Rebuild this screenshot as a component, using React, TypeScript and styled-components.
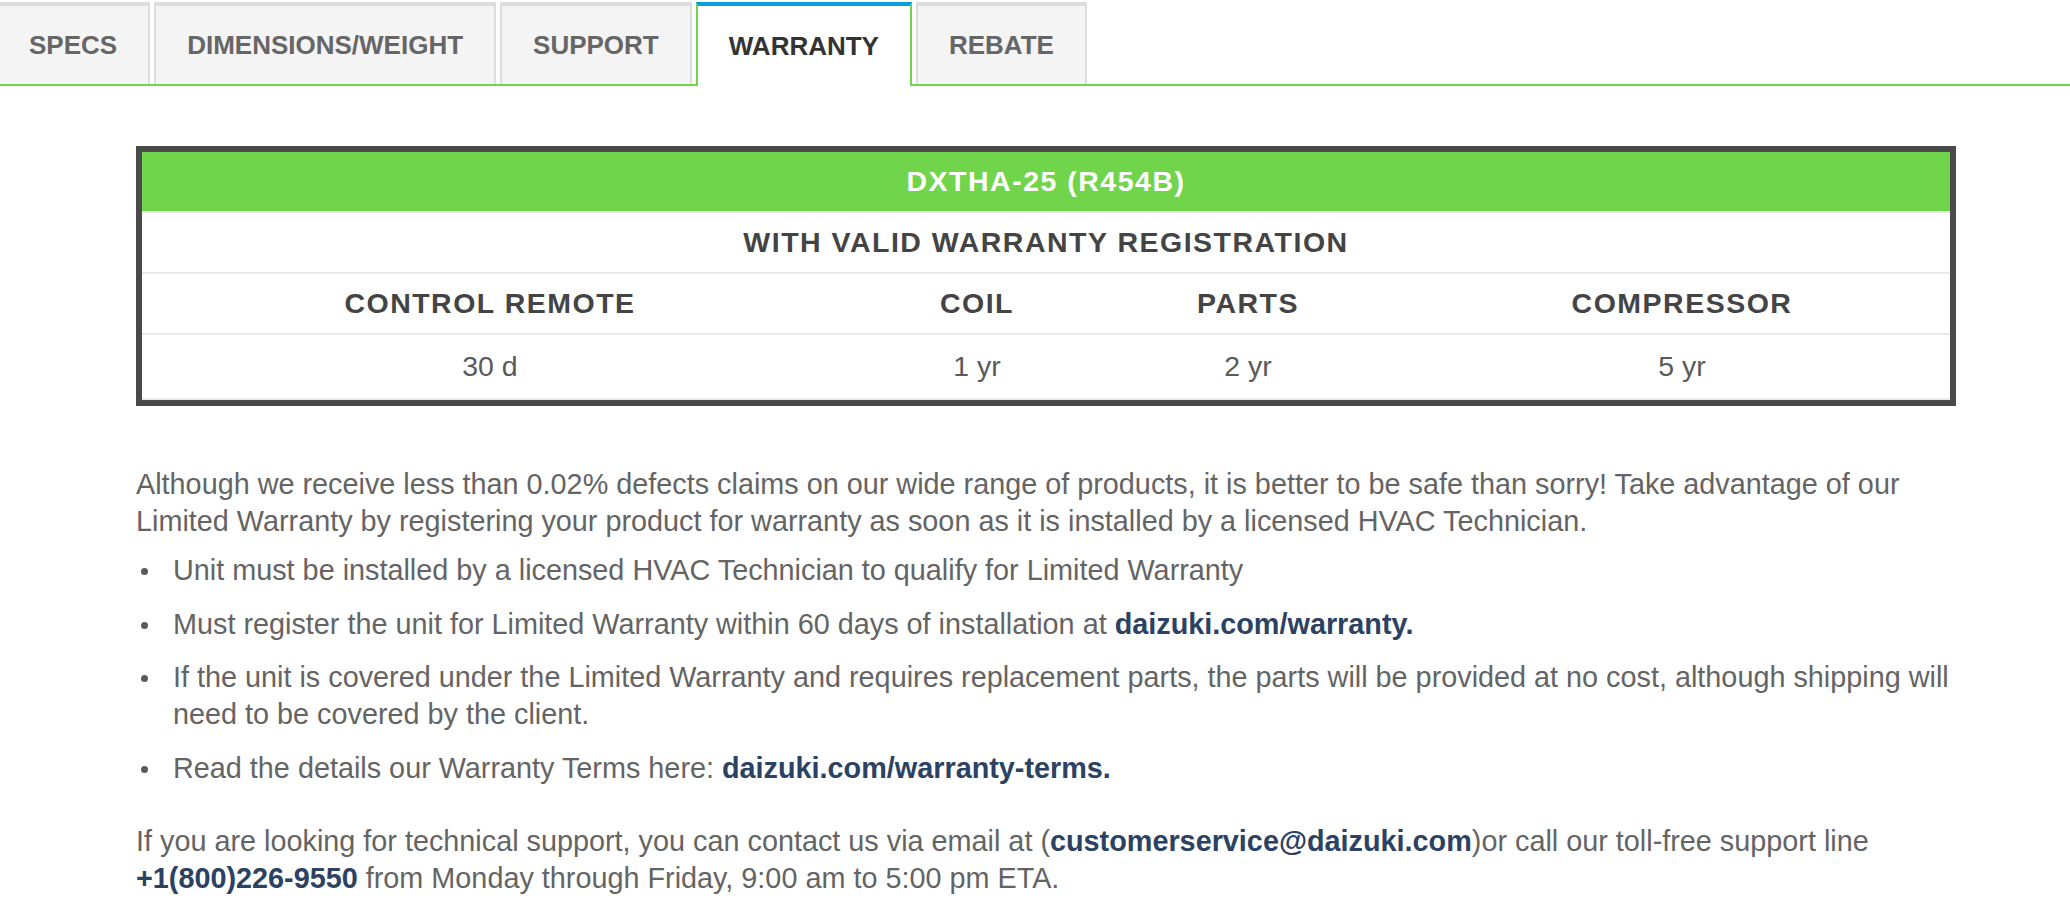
import React from 'react'
import styled, { createGlobalStyle } from 'styled-components'

const GREEN = '#71d54b'
const BLUE = '#0a9fdb'

const GlobalStyle = createGlobalStyle`
	html, body {
		margin: 0;
		padding: 0;
		background: #ffffff;
		font-family: "Liberation Sans", Arial, sans-serif;
	}
`

const TabBar = styled.div`
	display: flex;
	align-items: flex-end;
	padding-top: 2px;
	border-bottom: 2px solid ${GREEN};
`

const Tab = styled.div<{ $active?: boolean; $first?: boolean }>`
	display: flex;
	align-items: center;
	height: ${(p) => (p.$active ? '80px' : '78px')};
	margin-right: 4px;
	margin-bottom: ${(p) => (p.$active ? '-2px' : '0')};
	padding: 0 31px 0 ${(p) => (p.$first ? '29px' : '31px')};
	background: ${(p) => (p.$active ? '#ffffff' : '#f4f4f4')};
	border-top: 4px solid ${(p) => (p.$active ? BLUE : '#dddddd')};
	border-left: ${(p) => (p.$first ? 'none' : `2px solid ${p.$active ? GREEN : '#dddddd'}`)};
	border-right: 2px solid ${(p) => (p.$active ? GREEN : '#dddddd')};
	font-size: 26px;
	font-weight: 700;
	color: ${(p) => (p.$active ? '#333333' : '#666666')};
	white-space: nowrap;
`

const Content = styled.div`
	padding: 60px 94px 40px 136px;
`

const Table = styled.div`
	margin-right: 20px;
	border: 6px solid #4a4a4a;
`

const TitleRow = styled.div`
	display: flex;
	align-items: center;
	justify-content: center;
	height: 59px;
	background: ${GREEN};
	border-bottom: 2px solid #e9e9e9;
	color: #ffffff;
	font-size: 28.5px;
	font-weight: 700;
	letter-spacing: 1.5px;
`

const Row = styled.div<{ $tall?: boolean }>`
	display: grid;
	grid-template-columns: 696px 278px 264px 1fr;
	height: ${(p) => (p.$tall ? '63px' : '59px')};
	border-bottom: 2px solid #e9e9e9;
`

const Cell = styled.div<{ $head?: boolean; $span?: number; $last?: boolean }>`
	display: flex;
	align-items: center;
	justify-content: center;
	grid-column: span ${(p) => p.$span ?? 1};
	padding-left: ${(p) => (p.$last ? '34px' : '0')};
	font-size: 28.5px;
	font-weight: ${(p) => (p.$head ? 700 : 400)};
	letter-spacing: ${(p) => (p.$head ? '1.5px' : '0')};
	color: ${(p) => (p.$head ? '#444444' : '#5a5a5a')};
`

const Paragraph = styled.p<{ $gap: number }>`
	margin: ${(p) => p.$gap}px 0 0;
	font-size: 28.8px;
	line-height: 37px;
	color: #646464;
`

const List = styled.ul`
	list-style: none;
	margin: 12px 0 0;
	padding: 0 0 0 5px;
	display: flex;
	flex-direction: column;
	gap: 16.5px;
`

const Item = styled.li`
	display: flex;
	align-items: flex-start;
	gap: 25px;
	font-size: 28.8px;
	line-height: 37px;
	color: #646464;
`

const Bullet = styled.span`
	flex: none;
	width: 7px;
	height: 7px;
	margin-top: 16px;
	border-radius: 50%;
	background: #5a5a5a;
`

const Link = styled.a`
	color: #2b4263;
	font-weight: 700;
	text-decoration: none;
`

const tabs = ['SPECS', 'DIMENSIONS/WEIGHT', 'SUPPORT', 'WARRANTY', 'REBATE']

const columns = [
	{ label: 'CONTROL REMOTE', value: '30 d' },
	{ label: 'COIL', value: '1 yr' },
	{ label: 'PARTS', value: '2 yr' },
	{ label: 'COMPRESSOR', value: '5 yr' },
]

export default function App() {
	return (
		<>
			<GlobalStyle />
			<TabBar>
				{tabs.map((tab, index) => (
					<Tab key={tab} $first={index === 0} $active={tab === 'WARRANTY'}>{tab}</Tab>
				))}
			</TabBar>
			<Content>
				<Table>
					<TitleRow>DXTHA-25 (R454B)</TitleRow>
					<Row>
						<Cell $head $span={4}>WITH VALID WARRANTY REGISTRATION</Cell>
					</Row>
					<Row>
						{columns.map((col, index) => (
							<Cell key={col.label} $head $last={index === columns.length - 1}>{col.label}</Cell>
						))}
					</Row>
					<Row $tall>
						{columns.map((col, index) => (
							<Cell key={col.label} $last={index === columns.length - 1}>{col.value}</Cell>
						))}
					</Row>
				</Table>
				<Paragraph $gap={60}>
					Although we receive less than 0.02% defects claims on our wide range of products, it is better to be safe than sorry! Take advantage of our Limited Warranty by registering your product for warranty as soon as it is installed by a licensed HVAC Technician.
				</Paragraph>
				<List>
					<Item><Bullet /><span>Unit must be installed by a licensed HVAC Technician to qualify for Limited Warranty</span></Item>
					<Item><Bullet /><span>Must register the unit for Limited Warranty within 60 days of installation at <Link href="#">daizuki.com/warranty.</Link></span></Item>
					<Item><Bullet /><span>If the unit is covered under the Limited Warranty and requires replacement parts, the parts will be provided at no cost, although shipping will need to be covered by the client.</span></Item>
					<Item><Bullet /><span>Read the details our Warranty Terms here: <Link href="#">daizuki.com/warranty-terms.</Link></span></Item>
				</List>
				<Paragraph $gap={36}>
					If you are looking for technical support, you can contact us via email at (<Link href="#">customerservice@daizuki.com</Link>)or call our toll-free support line <Link href="#">+1(800)226-9550</Link> from Monday through Friday, 9:00 am to 5:00 pm ETA.
				</Paragraph>
			</Content>
		</>
	)
}
